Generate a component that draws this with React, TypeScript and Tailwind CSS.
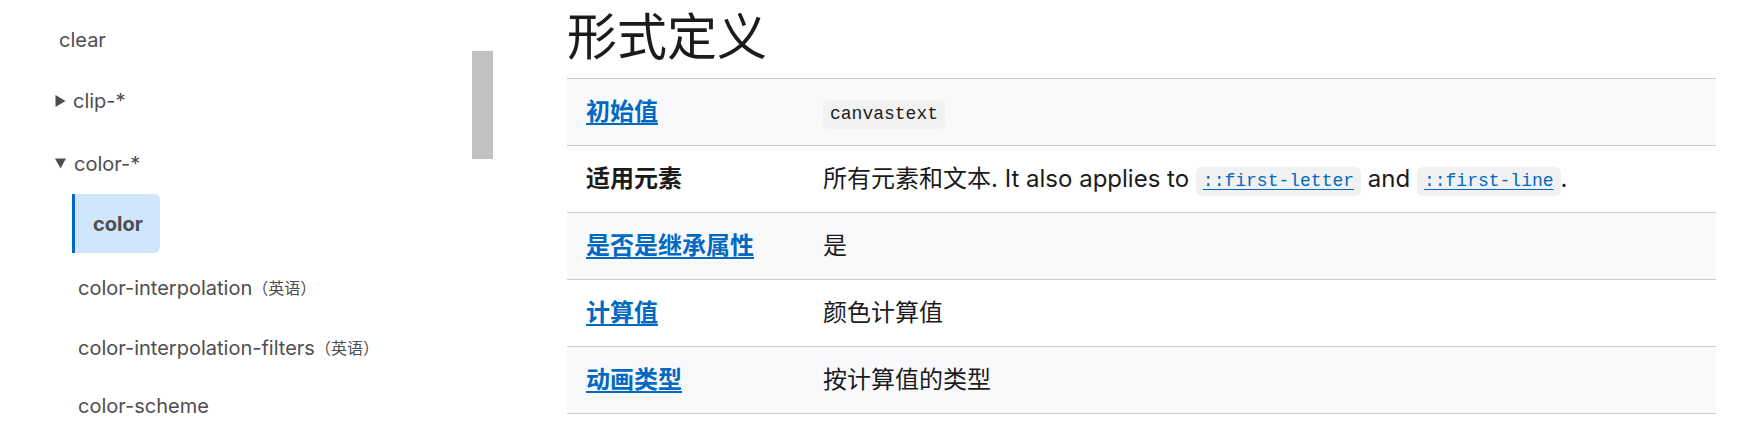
import * as React from "react";

const sans = "font-['Inter','Noto_Sans_CJK_SC',sans-serif]";
const mono = "font-['Liberation_Mono','Noto_Sans_CJK_SC',monospace]";

const Code = ({ children, link }: { children: React.ReactNode; link?: boolean }) => (
  <code
    className={`${mono} inline-block rounded-[6px] bg-[#f2f1f1] px-[7px] py-[4px] text-[18px] leading-[21px] align-[1px] ${
      link ? "text-[#0069c2] underline underline-offset-[3px]" : "text-[#1b1b1b]"
    }`}
  >
    {children}
  </code>
);

const Arrow = ({ open }: { open?: boolean }) =>
  open ? (
    <svg width="12" height="11" viewBox="0 0 12 11" className="mr-[7px] shrink-0">
      <path d="M0 0.5 L11 0.5 L5.5 10.5 Z" fill="#4e4e4e" />
    </svg>
  ) : (
    <svg width="11" height="12" viewBox="0 0 11 12" className="mr-[7px] shrink-0">
      <path d="M0.5 0 L10.5 6 L0.5 12 Z" fill="#4e4e4e" />
    </svg>
  );

const rows: { label: string; link: boolean; value: React.ReactNode }[] = [
  { label: "初始值", link: true, value: <Code>canvastext</Code> },
  {
    label: "适用元素",
    link: false,
    value: (
      <>
        所有元素和文本. It also applies to <Code link>::first-letter</Code> and{" "}
        <Code link>::first-line</Code>.
      </>
    ),
  },
  { label: "是否是继承属性", link: true, value: "是" },
  { label: "计算值", link: true, value: "颜色计算值" },
  { label: "动画类型", link: true, value: "按计算值的类型" },
];

export default function App() {
  return (
    <div className={`${sans} flex h-[437px] w-full overflow-hidden bg-white`}>
      {/* sidebar */}
      <aside className="flex w-[493px] shrink-0">
        <nav className="flex-1 pt-[10px] text-[20px] text-[#4e4e4e]">
          <div className="flex h-[60px] items-center pl-[59px]">clear</div>
          <div className="flex h-[61px] items-center pl-[55px]">
            <Arrow />
            clip-*
          </div>
          <div className="flex h-[63px] items-center pl-[55px] pt-[2px]">
            <Arrow open />
            color-*
          </div>
          <div className="pl-[72px]">
            <div className="flex h-[59px] w-[88px] items-center rounded-r-[6px] border-l-[3px] border-[#0069c2] bg-[#cfe6fc] pl-[18px] font-bold">
              color
            </div>
          </div>
          <div className="mt-[5px] flex h-[60px] items-center pl-[78px]">
            color-interpolation
            <span className="text-[16px]">（英语）</span>
          </div>
          <div className="flex h-[60px] items-center pl-[78px]">
            color-interpolation-filters
            <span className="text-[16px]">（英语）</span>
          </div>
          <div className="flex h-[56px] items-center pl-[78px]">color-scheme</div>
        </nav>
        <div className="w-[21px] shrink-0">
          <div className="mt-[51px] h-[108px] bg-[#c1c1c1]" />
        </div>
      </aside>

      {/* content */}
      <main className="ml-[74px] w-[1149px] shrink-0 text-[#1b1b1b]">
        <h2 className="h-[78px] pt-[9px] text-[50px] leading-[56px] font-normal">形式定义</h2>
        <div className="border-b border-[#cdcdcd]">
          {rows.map((r, i) => (
            <div
              key={r.label}
              className={`flex h-[67px] items-center border-t border-[#cdcdcd] text-[24px] ${
                i % 2 === 0 ? "bg-[#f9f9fb]" : "bg-white"
              }`}
            >
              <div className="w-[238px] shrink-0 pl-[19px] font-bold">
                {r.link ? (
                  <a className="text-[#0069c2] underline underline-offset-[3px]">{r.label}</a>
                ) : (
                  r.label
                )}
              </div>
              <div className="pl-[18px]">{r.value}</div>
            </div>
          ))}
        </div>
      </main>
    </div>
  );
}
